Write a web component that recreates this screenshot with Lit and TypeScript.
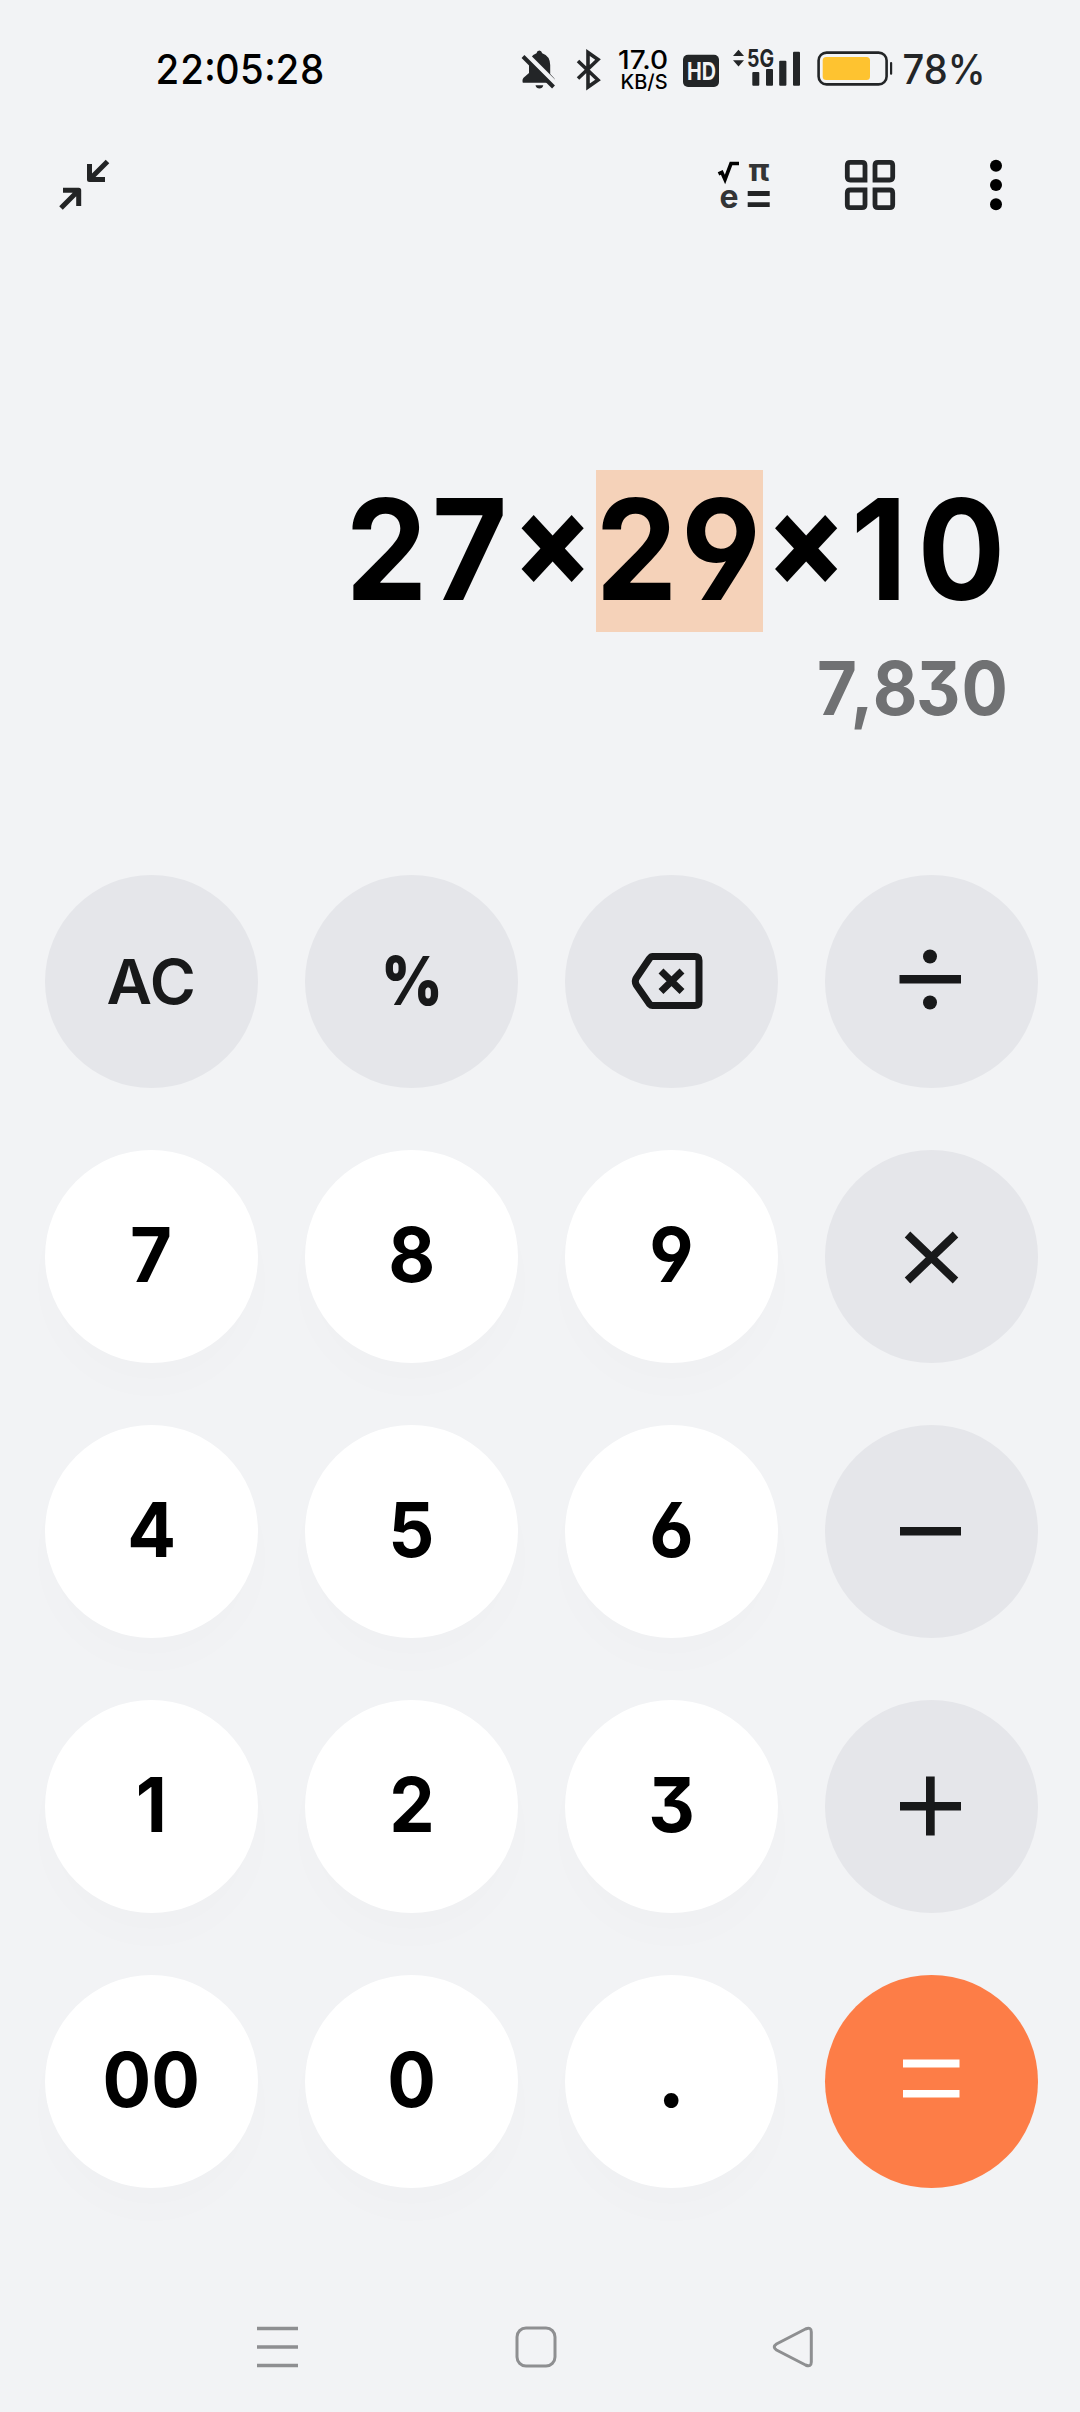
import { LitElement, html, css, svg, type TemplateResult } from "lit";
import { customElement, property } from "lit/decorators.js";
import { classMap } from "lit/directives/class-map.js";

type KeyKind = "digit" | "op" | "equals";
interface Key {
  id: string;
  kind: KeyKind;
  label?: string;
  cls?: string;
  icon?: TemplateResult;
}

// Key icons share a 213 x 213 box, the size of a key.
const keyIcon = (label: string, body: unknown) => html`
  <svg class="icon" viewBox="0 0 213 213" role="img" aria-label=${label}>${body}</svg>
`;

const backspace = keyIcon("Backspace", svg`
  <path d="M87.500 81.500H130Q134 81.500 134 85.500V126.500Q134 130.500 130 130.500H87.500Q86 130.500 84.500 129L71.300 110Q69.300 106 71.300 103L84.500 83.500Q86 81.500 87.500 81.500Z" fill="none" stroke="#18191a" stroke-width="7" stroke-linejoin="round"/>
  <path d="M96 96L117 116.500M117 96L96 116.500" stroke="#18191a" stroke-width="7"/>`);

const divide = keyIcon("Divide", svg`
  <rect x="74.500" y="100" width="61.500" height="8.500" fill="#18191a"/>
  <circle cx="105" cy="81.500" r="7" fill="#18191a"/><circle cx="105" cy="127.500" r="7" fill="#18191a"/>`);

const multiply = keyIcon("Multiply", svg`
  <path d="M82.500 84.500L130.500 130.500M130.500 84.500L82.500 130.500" stroke="#18191a" stroke-width="8"/>`);

const minus = keyIcon("Minus", svg`
  <rect x="75" y="102" width="61" height="8.500" fill="#18191a"/>`);

const plus = keyIcon("Plus", svg`
  <rect x="75" y="102" width="61" height="8.500" fill="#18191a"/>
  <rect x="101" y="76.500" width="8.700" height="59" fill="#18191a"/>`);

const equals = keyIcon("Equals", svg`
  <rect x="78" y="84.500" width="56.500" height="8" fill="#fff"/>
  <rect x="78" y="115" width="56.500" height="7.500" fill="#fff"/>`);

const digit = (d: string, cls = ""): Key => ({ id: d, kind: "digit", label: d, cls });

const KEYS: Key[] = [
  { id: "ac", kind: "op", label: "AC", cls: "ac" },
  { id: "percent", kind: "op", label: "%", cls: "percent" },
  { id: "backspace", kind: "op", icon: backspace },
  { id: "divide", kind: "op", icon: divide },
  digit("7"), digit("8"), digit("9"),
  { id: "multiply", kind: "op", icon: multiply },
  digit("4"), digit("5"), digit("6"),
  { id: "minus", kind: "op", icon: minus },
  digit("1"), digit("2"), digit("3"),
  { id: "plus", kind: "op", icon: plus },
  digit("00"), digit("0"), digit(".", "point"),
  { id: "equals", kind: "equals", icon: equals },
];

const SQUEEZE = 0.93;
const centres = (...xs: number[]) => xs.map((x) => (x / SQUEEZE).toFixed(1)).join(" ");

@customElement("calc-key")
export class CalcKey extends LitElement {
  @property({ attribute: false }) key!: Key;

  static styles = css`
    :host { display: block; }
    .key {
      display: flex;
      align-items: center;
      justify-content: center;
      box-sizing: border-box;
      width: 213px;
      height: 213px;
      margin: 0;
      padding: 0;
      border: 0;
      border-radius: 50%;
      color: #000;
      font-family: Inter, "Open Sans", sans-serif;
      font-feature-settings: "cv03", "cv04", "cv09";
    }
    .digit { background: #fff; box-shadow: 0 26px 40px rgba(20, 30, 50, 0.011); }
    .op { background: #e5e6ea; }
    .equals { background: #fd7d47; }
    .icon { display: block; width: 213px; height: 213px; }
    .label {
      font-size: 76px;
      line-height: 90px;
      font-weight: 700;
      margin-top: -5px;
      transform: scaleX(0.95);
    }
    .label.point { font-weight: 900; }
    .label.ac {
      font-size: 62px;
      font-weight: 600;
      color: #18191a;
      margin-top: 0;
      transform: scaleX(1.01);
    }
    .label.percent {
      font-size: 67px;
      font-weight: 900;
      color: #18191a;
      margin-top: -2px;
      transform: scaleX(0.87);
    }
  `;

  render() {
    const k = this.key;
    return html`
      <button class=${classMap({ key: true, [k.kind]: true })}>
        ${k.icon ?? html`<span class="label ${k.cls ?? ""}">${k.label}</span>`}
      </button>
    `;
  }
}

@customElement("status-bar")
export class StatusBar extends LitElement {
  static styles = css`
    :host { display: block; }
    .bar {
      display: flex;
      align-items: center;
      justify-content: space-between;
      height: 138px;
      box-sizing: border-box;
      padding: 0 90px 0 155px;
      font-family: Inter, "Open Sans", sans-serif;
    }
    .time {
      font-size: 41px;
      font-weight: 500;
      color: #000;
      font-feature-settings: "tnum", "cv03", "cv04";
      transform: scaleX(0.935);
      transform-origin: left;
    }
    .icons { display: block; width: 470px; height: 50px; overflow: visible; }
    .t { font-family: Inter, "Open Sans", sans-serif; }
  `;

  render() {
    return html`
      <div class="bar">
        <span class="time">22:05:28</span>
        <svg class="icons" viewBox="520 44 470 50">
          <g fill="#232527">
            <path d="M529 73V66Q529 56 536.500 53.300Q537 50.500 539.300 50.500Q541.500 50.500 542.200 53.300Q550 56 550.200 65V74L554 78Q556 80.500 555.500 82.800H522.800Q521.500 79 525 76.500Z"/>
            <path d="M535.500 85.300H543.300Q542.500 88.500 539.400 88.500Q536.300 88.500 535.500 85.300Z"/>
          </g>
          <path d="M525.500 53.500L556.500 84.500" stroke="#f2f3f5" stroke-width="5"/>
          <path d="M523 56.500L553.500 87" stroke="#232527" stroke-width="4"/>
          <path d="M578 61L598 80L588 87V52.500L598 59.500L578 78.500" fill="none" stroke="#232527" stroke-width="3.600"/>
          <text class="t" x="618" y="69" font-size="26" font-weight="550" textLength="50" lengthAdjust="spacingAndGlyphs">17.0</text>
          <text class="t" x="620.500" y="89" font-size="20" font-weight="550" textLength="47" lengthAdjust="spacingAndGlyphs">KB/S</text>
          <rect x="683" y="54.700" width="36" height="32.300" rx="5" fill="#232527"/>
          <text class="t" x="687" y="79.700" font-size="24.500" font-weight="700" fill="#f2f3f5" textLength="29" lengthAdjust="spacingAndGlyphs">HD</text>
          <g fill="#232527">
            <path d="M733 56L738.500 49.700L744 56Z"/><path d="M733 60.300L738.500 66.500L744 60.300Z"/>
            <text class="t" x="747" y="67" font-size="24" font-weight="700" textLength="27" lengthAdjust="spacingAndGlyphs">5G</text>
            <rect x="752.300" y="72" width="7" height="13.700" rx="1"/>
            <rect x="766" y="69" width="7" height="16.700" rx="1"/>
            <rect x="779.200" y="60.700" width="7.200" height="25" rx="1"/>
            <rect x="793" y="51.700" width="7" height="34" rx="1"/>
            <rect x="890" y="62" width="2.200" height="12.700" rx="1"/>
          </g>
          <rect x="818.600" y="52.600" width="68" height="31.800" rx="8" fill="none" stroke="#232527" stroke-width="2.600"/>
          <rect x="822.700" y="57" width="47.300" height="23" rx="3.500" fill="#fec330"/>
          <text class="t" x="902.500" y="84" font-size="41" font-weight="450" fill="#232527" textLength="83" lengthAdjust="spacingAndGlyphs">78%</text>
        </svg>
      </div>
    `;
  }
}

@customElement("app-root")
export class AppRoot extends LitElement {
  static styles = css`
    :host { display: block; }
    .screen {
      display: flex;
      flex-direction: column;
      width: 1080px;
      height: 2412px;
      overflow: hidden;
      background: #f2f3f5;
      font-family: Inter, "Open Sans", sans-serif;
      font-feature-settings: "cv03", "cv04", "cv09";
    }
    .toolbar {
      display: flex;
      align-items: center;
      height: 94px;
      padding: 0 64px 0 56px;
    }
    .toolbar svg { display: block; height: 60px; overflow: visible; }
    .collapse { width: 56px; margin-right: auto; }
    .functions { width: 60px; margin-right: 66px; }
    .grid { width: 60px; margin-right: 76px; }
    .more { width: 40px; }
    .display {
      display: flex;
      flex-direction: column;
      height: 643px;
      box-sizing: border-box;
      padding-top: 238px;
    }
    .expression, .result { display: block; width: 1080px; overflow: visible; }
    .expression { height: 162px; }
    .result { height: 88px; margin-top: 12px; }
    .display text { text-anchor: middle; font-weight: 700; }
    .expression text { font-size: 140px; fill: #000; }
    .expression .times { font-size: 125px; font-weight: 850; }
    .expression rect { fill: #f5d2b9; }
    .result text { font-size: 74px; fill: #707173; }
    .keypad {
      display: grid;
      grid-template-columns: repeat(4, 213px);
      column-gap: 47px;
      row-gap: 62px;
      padding: 0 45px;
    }
    .nav {
      display: flex;
      align-items: center;
      justify-content: space-between;
      flex: 1;
      padding: 93px 264px 0 255px;
    }
    .nav svg { display: block; width: 44px; height: 44px; }
  `;

  render() {
    return html`
      <div class="screen">
        <status-bar></status-bar>
        <header class="toolbar">
          <svg class="collapse" viewBox="56 155 56 60" fill="none" stroke="#232425" stroke-width="5">
            <path d="M89.500 164V179.500H105M89.500 179.500L107.500 161.500" stroke-linejoin="round"/>
            <path d="M63 190.200H78.700V206M78.700 190.200L61 208" stroke-linejoin="round"/>
          </svg>
          <svg class="functions" viewBox="714 155 60 60">
            <path d="M718.500 173.800L721.800 172.300L725 179.500L731 163.500H739" fill="none" stroke="#000" stroke-width="3.600"/>
            <text x="748.500" y="181" font-size="31" font-weight="700" fill="#333436" font-family="Inter, sans-serif" textLength="21" lengthAdjust="spacingAndGlyphs">π</text>
            <text x="719.500" y="208" font-size="32" font-weight="700" fill="#333436" font-family="Inter, sans-serif" textLength="19" lengthAdjust="spacingAndGlyphs">e</text>
            <path d="M747.700 193.500H769.700M747.700 204.700H769.700" stroke="#232425" stroke-width="4.800"/>
          </svg>
          <svg class="grid" viewBox="840 155 60 60" fill="none" stroke="#232527" stroke-width="4.800">
            <path d="M865 180H850.300Q847.300 180 847.300 177V165.300Q847.300 162.300 850.300 162.300H862Q865 162.300 865 165.300Z"/>
            <path d="M875 180V165.300Q875 162.300 878 162.300H889.700Q892.700 162.300 892.700 165.300V177Q892.700 180 889.700 180Z"/>
            <path d="M865 190V204.700Q865 207.700 862 207.700H850.300Q847.300 207.700 847.300 204.700V193Q847.300 190 850.300 190Z"/>
            <path d="M875 190H889.700Q892.700 190 892.700 193V204.700Q892.700 207.700 889.700 207.700H878Q875 207.700 875 204.700Z"/>
          </svg>
          <svg class="more" viewBox="976 155 40 60">
            <circle cx="996" cy="165.700" r="6"/><circle cx="996" cy="185" r="6"/><circle cx="996" cy="204.300" r="6"/>
          </svg>
        </header>
        <section class="display">
          <svg class="expression" viewBox="0 0 1080 162">
            <rect x="596" y="0" width="167" height="162"/>
            <g transform="scale(${SQUEEZE} 1)">
              <text y="129.700" x=${centres(386.5, 469.6)}>27<tspan class="times" y="115" x=${centres(552.7)}>×</tspan><tspan y="129.700" x=${centres(636.5, 721)}>29</tspan><tspan class="times" y="115" x=${centres(806)}>×</tspan><tspan y="129.700" x=${centres(879, 961.5)}>10</tspan></text>
            </g>
          </svg>
          <svg class="result" viewBox="0 0 1080 88">
            <g transform="scale(${SQUEEZE} 1)">
              <text y="71" x=${centres(837, 862, 895, 938.4, 984.7)}>7,830</text>
            </g>
          </svg>
        </section>
        <main class="keypad">
          ${KEYS.map((k) => html`<calc-key .key=${k}></calc-key>`)}
        </main>
        <nav class="nav">
          <svg viewBox="255 2324.500 44 44"><path d="M257 2328H298M257 2346.500H298M257 2365H298" stroke="#8e8f91" stroke-width="3.600"/></svg>
          <svg viewBox="513.500 2324.500 44 44"><rect x="516.500" y="2327.500" width="38" height="38" rx="9" fill="none" stroke="#8e8f91" stroke-width="3"/></svg>
          <svg viewBox="772 2324.500 44 44"><path d="M805.500 2328.500L776.500 2343.500Q772 2346.500 776.500 2349.500L805.500 2364.500Q811.300 2367 811.300 2361.500V2331.500Q811.300 2326 805.500 2328.500Z" fill="none" stroke="#8e8f91" stroke-width="3"/></svg>
        </nav>
      </div>
    `;
  }
}
